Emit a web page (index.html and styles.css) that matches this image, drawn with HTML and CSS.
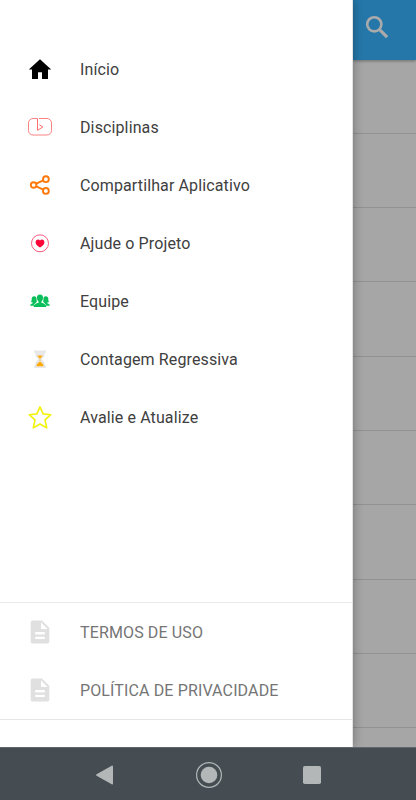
FILE: index.html
```html
<!DOCTYPE html>
<html lang="pt-BR">
<head>
<meta charset="utf-8">
<title>Menu</title>
<link rel="stylesheet" href="styles.css">
</head>
<body>
<div class="screen">
  <div class="content">
    <aside class="drawer">
      <nav class="menu">
        <a class="item"><svg class="icon" viewBox="0 0 24 24"><path d="M12 2.200.8 12.400H4V22h6v-6.800h4V22h6v-9.600h3.200z"/></svg><span>Início</span></a>
        <a class="item"><svg class="icon" viewBox="0 0 24 24" fill="none" stroke="#ff7474" stroke-width=".9"><path d="M9.500 3.500H5A4.500 4.500 0 0 0 .5 8v7.500A4.500 4.500 0 0 0 5 20h14a4.500 4.500 0 0 0 4.500-4.500V8A4.500 4.500 0 0 0 19 3.500h-8"/><path stroke="#ff5c5c" d="M9.500 3.500v11.800l5.300-3.300-3.500-2.300"/></svg><span>Disciplinas</span></a>
        <a class="item"><svg class="icon" viewBox="0 0 24 24" fill="none" stroke="#ff780a" stroke-width="1.900"><circle cx="5.600" cy="12" r="2.800"/><circle cx="17.900" cy="6.200" r="2.900"/><circle cx="17.900" cy="17.900" r="2.900"/><path d="m8.300 10.700 7-3.300m-7 5.900 7 3.300"/></svg><span>Compartilhar Aplicativo</span></a>
        <a class="item"><svg class="icon" viewBox="0 0 24 24"><circle cx="12" cy="12.300" r="8.500" fill="none" stroke="#fa315e" stroke-width=".8"/><path fill="#fb0538" d="M12 16.600c-2.200-1.300-4.400-3.100-4.400-5.400 0-2.600 2.900-3.400 4.400-1.800 1.500-1.600 4.400-.8 4.400 1.800 0 2.300-2.200 4.100-4.400 5.400z"/></svg><span>Ajude o Projeto</span></a>
        <a class="item"><svg class="icon" viewBox="0 0 24 24" fill="#0abf5b"><path d="M12 5.500c-2.200 0-3.200 1.500-3 3.500.1 1.700.7 2.900 1.600 3.600v1.200c-2.600.8-4.900 1.500-4.900 4.200h12.600c0-2.700-2.300-3.400-4.900-4.200v-1.200c.9-.7 1.500-1.900 1.600-3.600.2-2-.8-3.500-3-3.500z"/><path id="person" d="M6.200 7.300c-1.700 0-2.500 1.100-2.500 2.700 0 1.500-.2 2.300-.9 3 .6.300 1.200.5 1.900.5v.7c-1.500.5-2.500 1-2.500 2.500h3.600c.3-1.500 1.400-2.400 3.100-3.100l-1-.3v-.4c.5 0 .9-.2 1.200-.5-.5-.6-.5-1.400-.5-2.500 0-1.600-.8-2.600-2.400-2.600z"/><use href="#person" transform="translate(24 0) scale(-1 1)"/></svg><span>Equipe</span></a>
        <a class="item"><svg class="icon" viewBox="0 0 24 24"><path fill="#e8e8e8" d="M6 3.500h12v2h-1c0 3.500-1.400 5-3.500 6.800 2.100 1.800 3.500 3.300 3.500 6.800h1v2H6v-2h1c0-3.500 1.400-5 3.500-6.800C8.400 10.500 7 9 7 5.500H6z"/><path fill="#ffab0a" d="M9.500 8.400h5c-.5 1.400-1.300 2.400-2.500 3.100-1.200-.7-2-1.700-2.500-3.100zM8.300 19.300c.4-2.300 1.700-3.800 3.700-4.400 2 .6 3.300 2.100 3.700 4.400zM11.700 11h.6v4h-.6z"/></svg><span>Contagem Regressiva</span></a>
        <a class="item"><svg class="icon" viewBox="0 0 24 24" fill="none" stroke="#f2f20c" stroke-width="1.600" stroke-linejoin="round"><path d="M12 1.900 15.100 8.900 22.800 9.700 17 14.900 18.700 22.900 12 19 5.300 22.900 7 14.900 1.200 9.700 8.900 8.900z"/></svg><span>Avalie e Atualize</span></a>
      </nav>
      <nav class="legal">
        <a class="item"><svg class="icon" viewBox="0 0 24 24"><path fill="#e0e0e0" d="M14 .5H4.700c-1.200 0-2 .9-2 2.100v18.800c0 1.200.8 2.100 2 2.100h14.600c1.200 0 2-.9 2-2.100V7.700zM16.800 19H7.200v-2.200h9.600zm0-4.600H7.200v-2.300h9.600zM13 9V2.200L19.600 9z"/></svg><span>TERMOS DE USO</span></a>
        <a class="item"><svg class="icon" viewBox="0 0 24 24"><path fill="#e0e0e0" d="M14 .5H4.700c-1.200 0-2 .9-2 2.100v18.800c0 1.200.8 2.100 2 2.100h14.600c1.200 0 2-.9 2-2.100V7.700zM16.800 19H7.200v-2.200h9.600zm0-4.600H7.200v-2.300h9.600zM13 9V2.200L19.600 9z"/></svg><span>POLÍTICA DE PRIVACIDADE</span></a>
      </nav>
    </aside>
    <main class="page">
      <header class="appbar"><svg class="search" viewBox="0 0 24 24" fill="none" stroke="#aaa" stroke-width="2.600"><circle cx="9.300" cy="9.300" r="7.100"/><path stroke-width="3.200" d="m14.800 14.800 7.300 7.300"/></svg></header>
      <div class="row"></div><div class="row"></div><div class="row"></div><div class="row"></div><div class="row"></div><div class="row"></div><div class="row"></div><div class="row"></div><div class="row"></div>
      <div class="row"></div>
    </main>
  </div>
  <footer class="system">
    <svg viewBox="0 0 28 28"><path fill="#b3b7b8" d="M5.600 13.200 20.700 4.700q1.300-.6 1.300.8v17q0 1.400-1.300.8L5.600 14.800q-1.200-.8 0-1.600z"/></svg>
    <svg viewBox="0 0 28 28"><circle cx="14" cy="14" r="12.400" fill="none" stroke="#b3b7b8" stroke-width="1.200"/><circle cx="14" cy="14" r="8.300" fill="#b3b7b8"/></svg>
    <svg viewBox="0 0 28 28"><rect x="5" y="5" width="18" height="18" rx="1.800" fill="#b3b7b8"/></svg>
  </footer>
</div>
</body>
</html>
```
FILE: styles.css
```css
* { box-sizing: border-box; }
body { margin: 0; font-family: Roboto, sans-serif; }
.screen { width: 416px; height: 800px; display: flex; flex-direction: column; overflow: hidden; }
.content { height: 747px; display: flex; overflow: hidden; }
.drawer {
  width: 353px;
  flex: none;
  display: flex;
  flex-direction: column;
  justify-content: space-between;
  padding: 40px 0 27px;
  background: #fff;
  border-right: 1px solid #e3e3e3;
  box-shadow: 0 0 10px rgba(0, 0, 0, .32);
  z-index: 1;
}
.item { height: 58px; display: flex; align-items: center; gap: 28px; padding-left: 28px; font-size: 16px; letter-spacing: .12px; color: #404040; white-space: nowrap; }
.icon { width: 24px; height: 24px; flex: none; }
.legal { border-top: 1px solid #ebebeb; border-bottom: 1px solid #e6e6e6; }
.legal .item { color: #757575; letter-spacing: .13px; }
.page { flex: 1; background: #a6a6a6; overflow: hidden; }
.appbar { height: 59.500px; padding: 15px 0 0 12px; background: #2577a9; box-shadow: 0 1px 3px rgba(0, 0, 0, .35); }
.search { display: block; width: 24px; height: 24px; }
.row { height: 74.300px; border-bottom: 1px solid #919191; }
.system { flex: 1; display: flex; justify-content: center; align-items: center; gap: 75.500px; padding: 2px 0 0 1px; background: #454d52; border-top: 1px solid #60676b; }
.system svg { width: 28px; height: 28px; }
```
